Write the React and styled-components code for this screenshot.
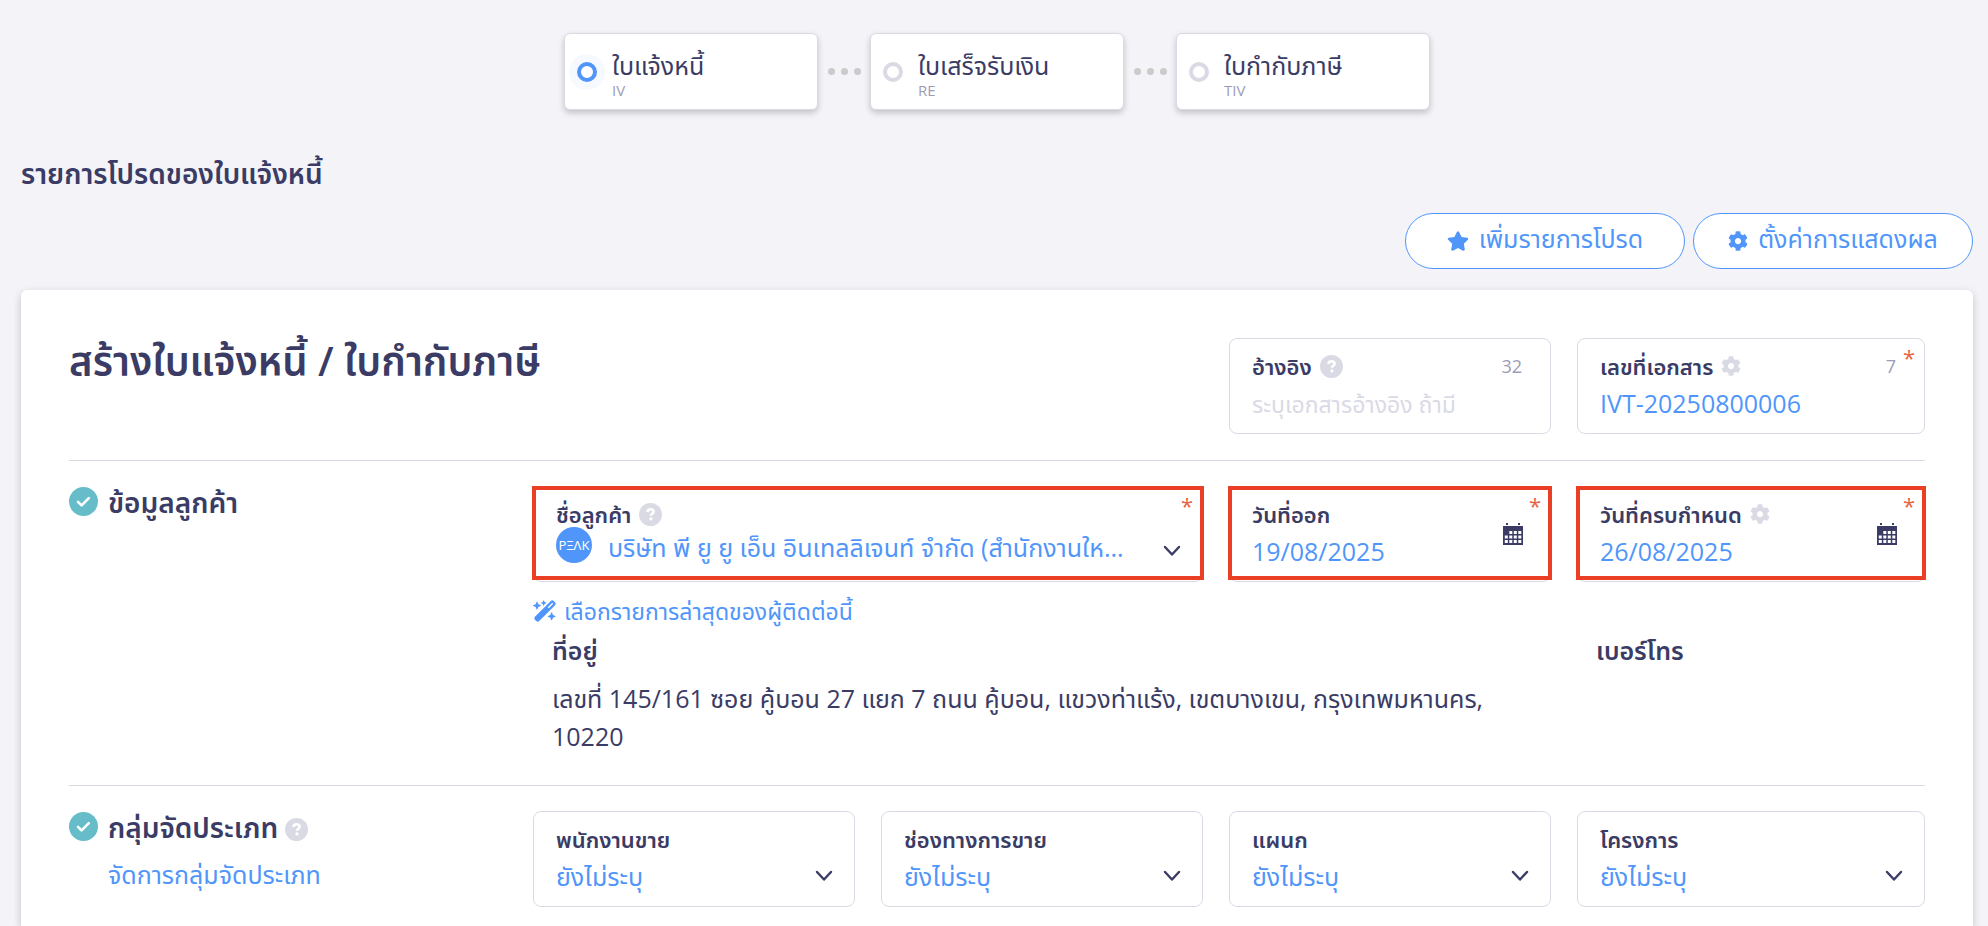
import React from 'react';
import styled, { createGlobalStyle, ThemeProvider } from 'styled-components';
import { FaStar, FaCog } from 'react-icons/fa';
import { FaWandMagicSparkles } from 'react-icons/fa6';

const theme = {
  page: '#f3f3f8',
  white: '#ffffff',
  navy: '#3a3c65',
  blue: '#5096fa',
  teal: '#66bdc9',
  line: '#dadae5',
  muted: '#9c9cb5',
  dot: '#cbcbcb',
  red: '#eb3f25',
  star: '#e8633f',
};

const GlobalStyle = createGlobalStyle`
  *, *::before, *::after {
    box-sizing: border-box;
  }

  body {
    margin: 0;
    background-color: ${ (props => props.theme.page) };
  }

  body, button, input, select {
    font-family: "Open Sans", "Noto Sans Thai", "Noto Sans", sans-serif;
    font-weight: 400;
  }
`;

const Page = styled.main`
  color: ${ (props => props.theme.navy) };
  display: flex;
  flex-direction: column;
  min-height: 100vh;
  padding: 33px 15px 0 21px;
`;

const Steps = styled.ol`
  display: flex;
  flex-shrink: 0;
  justify-content: center;
  list-style: none;
  margin: 0;
  padding: 0;
`;

const Step = styled.li`
  align-items: center;
  display: flex;
`;

const StepCard = styled.div`
  align-items: center;
  background-color: ${ (props => props.theme.white) };
  border: 1px solid ${ (props => props.theme.line) };
  border-radius: 6px;
  box-shadow: 0 3px 6px rgba(0, 0, 0, 0.2);
  display: flex;
  gap: 7px;
  height: 77px;
  padding-left: 4px;
  width: 254px;
`;

const StepMark = styled.span`
  align-items: center;
  background-color: ${ (props => props.$active ? '#f6faff' : 'transparent') };
  border-radius: 50%;
  display: flex;
  height: 36px;
  justify-content: center;
  width: 36px;

  &::before {
    border: 4px solid ${ (props => props.$active ? props.theme.blue : props.theme.line) };
    border-radius: 50%;
    background-color: ${ (props => props.theme.white) };
    content: "";
    height: 20px;
    width: 20px;
  }
`;

const StepText = styled.div`
  display: flex;
  flex-direction: column;
  padding-top: 6px;
`;

const StepName = styled.span`
  font-size: 25px;
  line-height: 32px;
`;

const StepCode = styled.span`
  color: ${ (props => props.theme.muted) };
  font-size: 15px;
  line-height: 19px;
`;

const Dots = styled.span`
  display: flex;
  gap: 6px;
  justify-content: center;
  width: 52px;

  i {
    background-color: ${ (props => props.theme.dot) };
    border-radius: 50%;
    height: 7px;
    width: 7px;
  }
`;

const PageTitle = styled.h1`
  flex-shrink: 0;
  font-size: 28px;
  font-weight: 600;
  line-height: 40px;
  margin: 43px 0 0;
`;

const Actions = styled.div`
  display: flex;
  flex-shrink: 0;
  gap: 8px;
  justify-content: flex-end;
  margin-top: 20px;
`;

const PillButton = styled.button`
  align-items: center;
  background-color: ${ (props => props.theme.white) };
  border: 1px solid ${ (props => props.theme.blue) };
  border-radius: 28px;
  color: ${ (props => props.theme.blue) };
  cursor: pointer;
  display: flex;
  font-size: 25px;
  gap: 10px;
  height: 56px;
  justify-content: center;
  padding: 0 0 2px;
  width: 280px;

  svg {
    margin-top: 2px;
  }
`;

const Card = styled.section`
  background-color: ${ (props => props.theme.white) };
  border-radius: 6px 6px 0 0;
  box-shadow: 0 3px 8px rgba(0, 0, 0, 0.2);
  flex: 1;
  margin-top: 21px;
  padding: 48px 48px 0;
`;

const Row = styled.div`
  border-bottom: ${ (props => props.$last ? 'none' : `1px solid ${props.theme.line}`) };
  display: grid;
  grid-template-columns: 4fr 3fr 3fr 3fr 3fr;
  margin-bottom: ${ (props => props.$last ? 0 : 25) }px;
  padding-bottom: ${ (props => props.$last ? 16 : 26) }px;
`;

const Cell = styled.div`
  grid-column: span ${ (props => props.$span || 1) };
  min-width: 0;
  padding-right: ${ (props => props.$end ? 0 : 26) }px;
`;

const CardTitle = styled.h2`
  font-size: 40px;
  font-weight: 600;
  grid-column: span 3;
  line-height: 46px;
  margin: 0;
`;

const SectionHead = styled.div`
  align-items: flex-start;
  display: flex;
  gap: 10px;
  padding-top: 1px;
`;

const SectionTitle = styled.h3`
  align-items: center;
  display: flex;
  font-size: 28px;
  font-weight: 600;
  gap: 7px;
  line-height: 30px;
  margin: 0;

  svg {
    margin-top: 4px;
  }
`;

const SectionLink = styled.a`
  color: ${ (props => props.theme.blue) };
  display: block;
  font-size: 25px;
  line-height: 32px;
  margin-top: 16px;
  text-decoration: none;
`;

const FieldBox = styled.div`
  border: 1px solid ${ (props => props.theme.line) };
  border-radius: 8px;
  display: flex;
  height: 96px;
  padding: 14px 18px 0 22px;
  position: relative;

  &::after {
    border: ${ (props => props.$marked ? `4px solid ${props.theme.red}` : 'none') };
    content: "";
    inset: -1px -2px 1px -2px;
    pointer-events: none;
    position: absolute;
  }
`;

const FieldBody = styled.div`
  flex: 1;
  min-width: 0;
`;

const FieldTop = styled.div`
  align-items: center;
  display: flex;
  gap: 8px;
  height: 26px;
`;

const Label = styled.label`
  font-size: 22px;
  font-weight: 600;
  line-height: 26px;
  white-space: nowrap;
`;

const Counter = styled.span`
  color: ${ (props => props.theme.muted) };
  font-size: 18px;
  line-height: 26px;
  margin-left: auto;
  padding-right: 10px;
`;

const Required = styled.span`
  color: ${ (props => props.theme.star) };
  font-size: 22px;
  line-height: 24px;
  position: absolute;
  right: 9px;
  top: 6px;
`;

const valueText = `
  appearance: none;
  background-color: transparent;
  border: none;
  display: block;
  height: 40px;
  line-height: 40px;
  margin: 0;
  outline: none;
  padding: 0;
  width: 100%;
`;

const TextInput = styled.input`
  ${valueText}
  color: ${ (props => props.theme.blue) };
  font-size: 25px;
  margin-top: 4px;

  &::placeholder {
    color: ${ (props => props.theme.line) };
    font-size: 23px;
    opacity: 1;
  }
`;

const SelectRow = styled.div`
  display: flex;
  margin-top: ${ (props => props.$tight ? 0 : 4) }px;
`;

const Select = styled.select`
  ${valueText}
  color: ${ (props => props.theme.blue) };
  flex: 1;
  font-size: 25px;
  min-width: 0;
`;

const Avatar = styled.span`
  align-items: center;
  background-color: ${ (props => props.theme.blue) };
  border-radius: 50%;
  color: ${ (props => props.theme.white) };
  display: flex;
  flex-shrink: 0;
  font-size: 13px;
  height: 36px;
  justify-content: center;
  margin-right: 16px;
  width: 36px;
`;

const ArrowIcon = styled.span`
  padding-top: 38px;
`;

const DateIcon = styled.span`
  padding: 22px 9px 0 0;
`;

const RecentLink = styled.a`
  align-items: center;
  color: ${ (props => props.theme.blue) };
  display: flex;
  font-size: 23px;
  gap: 7px;
  line-height: 32px;
  margin-top: 13px;
  padding-bottom: 4px;
  text-decoration: none;
`;

const Info = styled.div`
  grid-column: ${ (props => props.$columns) };
  padding: 0 26px 0 19px;

  h4 {
    font-size: 25px;
    font-weight: 600;
    line-height: 38px;
    margin: 0 0 10px;
  }

  p {
    font-size: 25px;
    line-height: 38px;
    margin: 0 0 4px;
  }
`;

const Check = () => (
  <svg width="29" height="29" viewBox="0 0 29 29" aria-hidden="true">
    <circle cx="14.500" cy="14.500" r="14.500" fill={theme.teal} />
    <path d="M9 14.800l3.600 3.600 7.200-7.200" fill="none" stroke="#fff" strokeWidth="2.600" strokeLinecap="round" strokeLinejoin="round" />
  </svg>
);

const Help = () => (
  <svg width="23" height="23" viewBox="0 0 23 23" aria-hidden="true">
    <circle cx="11.500" cy="11.500" r="11.500" fill={theme.line} />
    <path d="M8.400 9c.2-1.900 1.400-2.800 3.100-2.800 1.800 0 3.100 1 3.100 2.500 0 2-2.600 2.100-2.600 4" fill="none" stroke="#fff" strokeWidth="2.600" />
    <circle cx="11.900" cy="15.900" r="1.600" fill="#fff" />
  </svg>
);

const Chevron = () => (
  <svg width="24" height="24" viewBox="0 0 24 24" aria-hidden="true">
    <path d="M5 8l7 7.500 7-7.500" fill="none" stroke={theme.navy} strokeWidth="2.400" strokeLinecap="round" strokeLinejoin="round" />
  </svg>
);

const Calendar = () => (
  <svg width="20" height="22" viewBox="0 0 20 22" aria-hidden="true">
    <path d="M3 0h2v2H3zM15 0h2v2h-2zM0 3h20v19H0z" fill={theme.navy} />
    <g fill="#fff">
      <path d="M6.300 8h3v3h-3zM10.800 8h3v3h-3zM15.300 8h3v3h-3z" />
      <path d="M1.800 12.500h3v3h-3zM6.300 12.500h3v3h-3zM10.800 12.500h3v3h-3zM15.300 12.500h3v3h-3z" />
      <path d="M1.800 17h3v3h-3zM6.300 17h3v3h-3zM10.800 17h3v3h-3zM15.300 17h3v3h-3z" />
    </g>
  </svg>
);

const steps = [
  { name: 'ใบแจ้งหนี้', code: 'IV', active: true },
  { name: 'ใบเสร็จรับเงิน', code: 'RE' },
  { name: 'ใบกำกับภาษี', code: 'TIV' },
];

const groups = [
  { id: 'salesperson', label: 'พนักงานขาย' },
  { id: 'channel', label: 'ช่องทางการขาย' },
  { id: 'department', label: 'แผนก' },
  { id: 'project', label: 'โครงการ' },
];

const Field = ({ id, label, icon, counter, required, marked, side, children }) => (
  <FieldBox $marked={marked}>
    <FieldBody>
      <FieldTop>
        <Label htmlFor={id}>{label}</Label>
        {icon}
        {counter && <Counter>{counter}</Counter>}
      </FieldTop>
      {children}
    </FieldBody>
    {side}
    {required && <Required>*</Required>}
  </FieldBox>
);

const App = () => {
  const gear = <FaCog size={20} color={theme.line} />;
  const calendar = <DateIcon><Calendar /></DateIcon>;
  const arrow = <ArrowIcon><Chevron /></ArrowIcon>;

  return (
    <ThemeProvider theme={theme}>
      <GlobalStyle />
      <Page>
        <Steps>
          {
            steps.map((step, index) => (
              <Step key={step.code}>
                {index > 0 && <Dots><i /><i /><i /></Dots>}
                <StepCard>
                  <StepMark $active={step.active} />
                  <StepText>
                    <StepName>{step.name}</StepName>
                    <StepCode>{step.code}</StepCode>
                  </StepText>
                </StepCard>
              </Step>
            ))
          }
        </Steps>

        <PageTitle>รายการโปรดของใบแจ้งหนี้</PageTitle>

        <Actions>
          <PillButton type="button"><FaStar size={22} />เพิ่มรายการโปรด</PillButton>
          <PillButton type="button"><FaCog size={20} />ตั้งค่าการแสดงผล</PillButton>
        </Actions>

        <Card>
          <Row>
            <CardTitle>สร้างใบแจ้งหนี้ / ใบกำกับภาษี</CardTitle>
            <Cell>
              <Field id="reference" label="อ้างอิง" icon={<Help />} counter="32">
                <TextInput id="reference" placeholder="ระบุเอกสารอ้างอิง ถ้ามี" />
              </Field>
            </Cell>
            <Cell $end>
              <Field id="number" label="เลขที่เอกสาร" icon={gear} counter="7" required>
                <TextInput id="number" defaultValue="IVT-20250800006" />
              </Field>
            </Cell>
          </Row>

          <Row>
            <SectionHead>
              <Check />
              <SectionTitle>ข้อมูลลูกค้า</SectionTitle>
            </SectionHead>
            <Cell $span={2}>
              <Field id="customer" label="ชื่อลูกค้า" icon={<Help />} required marked side={arrow}>
                <SelectRow $tight>
                  <Avatar>PΞΛK</Avatar>
                  <Select id="customer">
                    <option>บริษัท พี ยู ยู เอ็น อินเทลลิเจนท์ จำกัด (สำนักงานให...</option>
                  </Select>
                </SelectRow>
              </Field>
              <RecentLink href="#recent"><FaWandMagicSparkles size={24} />เลือกรายการล่าสุดของผู้ติดต่อนี้</RecentLink>
            </Cell>
            <Cell>
              <Field id="issued" label="วันที่ออก" required marked side={calendar}>
                <TextInput id="issued" defaultValue="19/08/2025" />
              </Field>
            </Cell>
            <Cell $end>
              <Field id="due" label="วันที่ครบกำหนด" icon={gear} required marked side={calendar}>
                <TextInput id="due" defaultValue="26/08/2025" />
              </Field>
            </Cell>
            <Info $columns="2 / 5">
              <h4>ที่อยู่</h4>
              <p>เลขที่ 145/161 ซอย คู้บอน 27 แยก 7 ถนน คู้บอน, แขวงท่าแร้ง, เขตบางเขน, กรุงเทพมหานคร, 10220</p>
            </Info>
            <Info $columns="5 / 6">
              <h4>เบอร์โทร</h4>
            </Info>
          </Row>

          <Row $last>
            <SectionHead>
              <Check />
              <div>
                <SectionTitle>กลุ่มจัดประเภท <Help /></SectionTitle>
                <SectionLink href="#groups">จัดการกลุ่มจัดประเภท</SectionLink>
              </div>
            </SectionHead>
            {
              groups.map((group, index) => (
                <Cell key={group.id} $end={index === groups.length - 1}>
                  <Field id={group.id} label={group.label} side={arrow}>
                    <SelectRow>
                      <Select id={group.id}>
                        <option>ยังไม่ระบุ</option>
                      </Select>
                    </SelectRow>
                  </Field>
                </Cell>
              ))
            }
          </Row>
        </Card>
      </Page>
    </ThemeProvider>
  );
}

export default App;
